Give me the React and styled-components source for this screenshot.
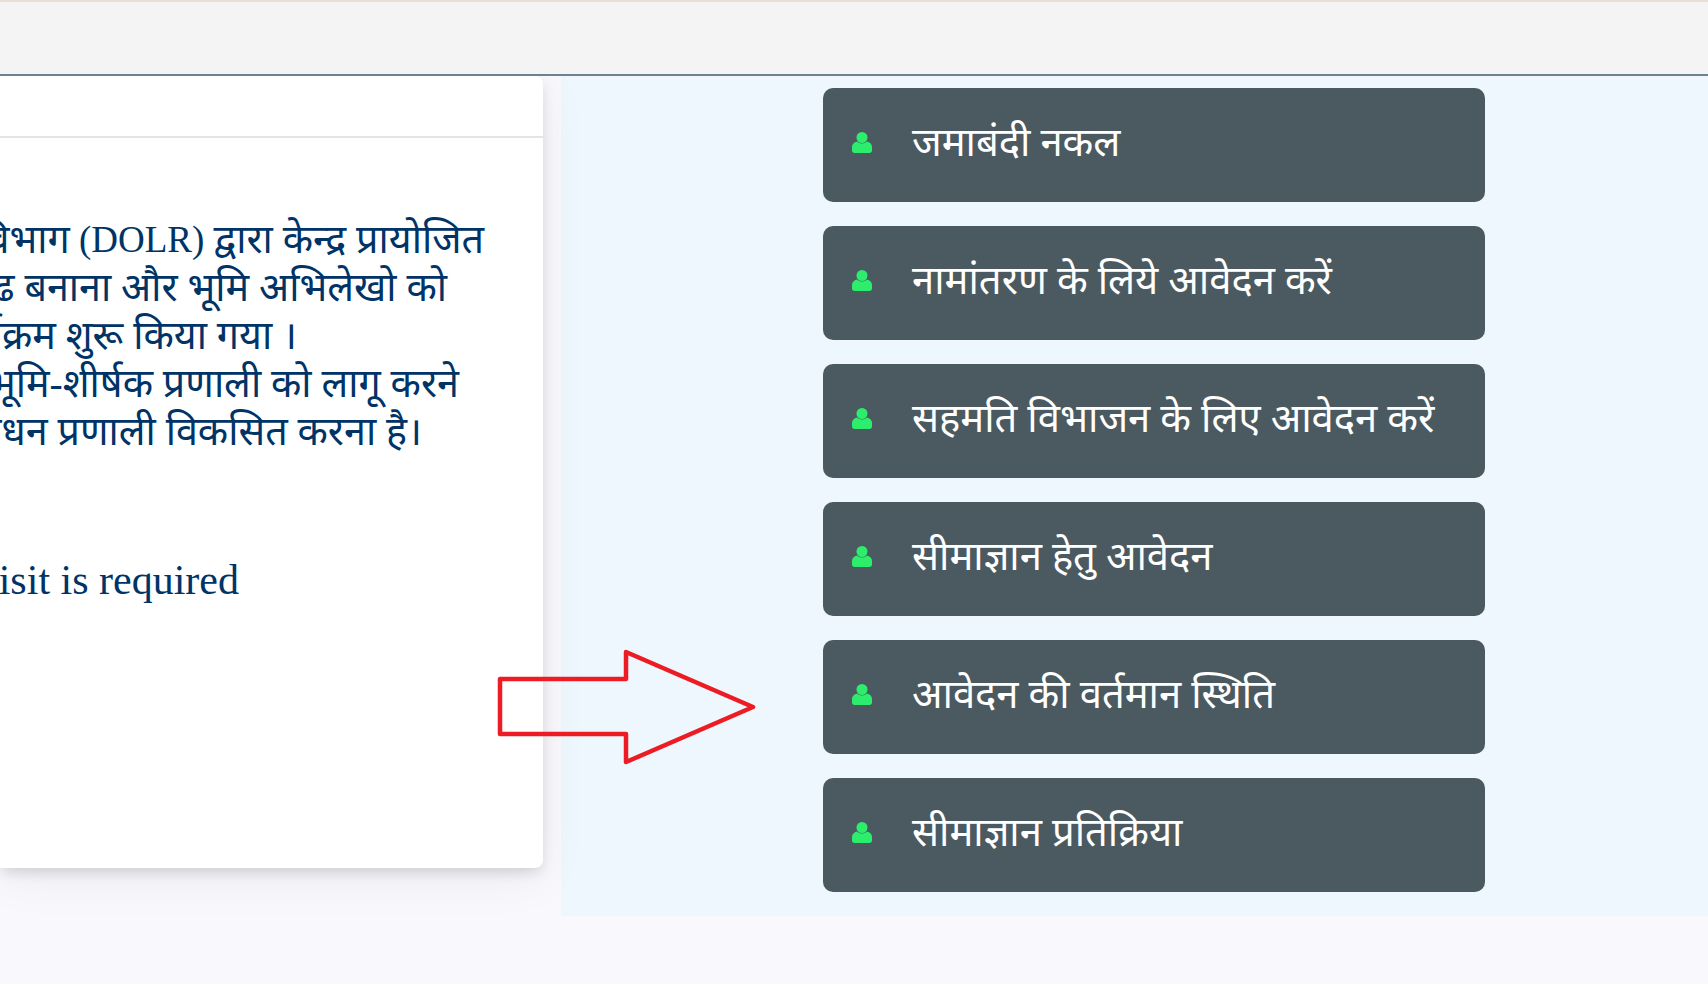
import styled, { createGlobalStyle } from "styled-components";

const GlobalStyle = createGlobalStyle`
  html, body {
    margin: 0;
    padding: 0;
    background: #f8f8fd;
    overflow: hidden;
  }
`;

const Page = styled.div`
  width: 1708px;
  height: 984px;
  position: relative;
  overflow: hidden;
  font-family: "Liberation Serif", "Noto Sans", serif;
`;

const TopBar = styled.header`
  position: relative;
  z-index: 1;
  height: 72px;
  background: #f4f4f4;
  border-top: 2px solid #e9dfd7;
  border-bottom: 2px solid #6c828f;
`;

const Main = styled.main`
  display: flex;
  align-items: flex-start;
`;

const Card = styled.section`
  width: 543px;
  height: 792px;
  flex-shrink: 0;
  background: #fff;
  border-radius: 0 8px 8px 0;
  box-shadow: 0 6px 14px -2px rgba(0, 0, 0, 0.14), 0 10px 50px rgba(0, 0, 0, 0.06);
  position: relative;
`;

const CardHead = styled.div`
  height: 60px;
  border-bottom: 2px solid #e1e5e8;
`;

const CardBody = styled.div`
  padding-top: 78px;
  color: #003366;
  font-size: 39.5px;
  line-height: 48px;
`;

const Line = styled.div`
  white-space: nowrap;
  display: flex;
  justify-content: flex-end;
  padding-right: ${(p) => p.$right}px;
`;

const VisitLine = styled(Line)`
  margin-top: 100px;
  font-size: 42px;
`;

const Latin = styled.span`
  font-size: 37px;
  white-space: pre;
`;

const Panel = styled.aside`
  margin-left: 18px;
  flex: 1;
  height: 840px;
  box-sizing: border-box;
  padding: 12px 223px 0 262px;
  background: #eff7fe;
  display: flex;
  flex-direction: column;
  gap: 24px;
`;

const ActionButton = styled.a`
  height: 114px;
  box-sizing: border-box;
  background: #4b5a60;
  border-radius: 10px;
  padding: 0 0 9px 29px;
  display: flex;
  align-items: center;
  gap: 40px;
  color: #fff;
  font-size: 40px;
  white-space: nowrap;
`;

const UserIcon = styled.svg`
  width: 20px;
  height: 21px;
  flex-shrink: 0;
  fill: #2cee6c;
  position: relative;
  top: 2px;
`;

const Arrow = styled.svg`
  position: absolute;
  left: 490px;
  top: 640px;
  width: 280px;
  height: 130px;
`;

const actions = [
  "जमाबंदी नकल",
  "नामांतरण के लिये आवेदन करें",
  "सहमति विभाजन के लिए आवेदन करें",
  "सीमाज्ञान हेतु आवेदन",
  "आवेदन की वर्तमान स्थिति",
  "सीमाज्ञान प्रतिक्रिया",
];

function Person() {
  return (
    <UserIcon viewBox="0 0 20 21">
      <circle cx="10" cy="5.5" r="5.5" />
      <path d="M5 9.500c1.300 1.300 3 2 5 2s3.700-.7 5-2c2.900.6 5 2.800 5 5.500v3.500c0 1.400-1.100 2.500-2.500 2.500h-15C1.100 21 0 19.900 0 18.500V15c0-2.700 2.100-4.900 5-5.500z" />
    </UserIcon>
  );
}

export default function App() {
  return (
    <Page>
      <GlobalStyle />
      <TopBar />
      <Main>
        <Card>
          <CardHead />
          <CardBody>
            <Line $right={59}>
              विभाग<Latin> (DOLR) </Latin>द्वारा केन्द्र प्रायोजित
            </Line>
            <Line $right={96}>सुदृढ बनाना और भूमि अभिलेखो को</Line>
            <Line $right={246}>कार्यक्रम शुरू किया गया ।</Line>
            <Line $right={84}>भूमि-शीर्षक प्रणाली को लागू करने</Line>
            <Line $right={121}>संसाधन प्रणाली विकसित करना है।</Line>
            <VisitLine $right={304}>visit is required</VisitLine>
          </CardBody>
        </Card>
        <Panel>
          {actions.map((a) => (
            <ActionButton key={a}>
              <Person />
              {a}
            </ActionButton>
          ))}
        </Panel>
      </Main>
      <Arrow viewBox="490 640 280 130">
        <path
          d="M500 679H626V652L753 707L626 762V734H500Z"
          fill="none"
          stroke="#ed1c24"
          strokeWidth="4.5"
          strokeLinejoin="round"
        />
      </Arrow>
    </Page>
  );
}
